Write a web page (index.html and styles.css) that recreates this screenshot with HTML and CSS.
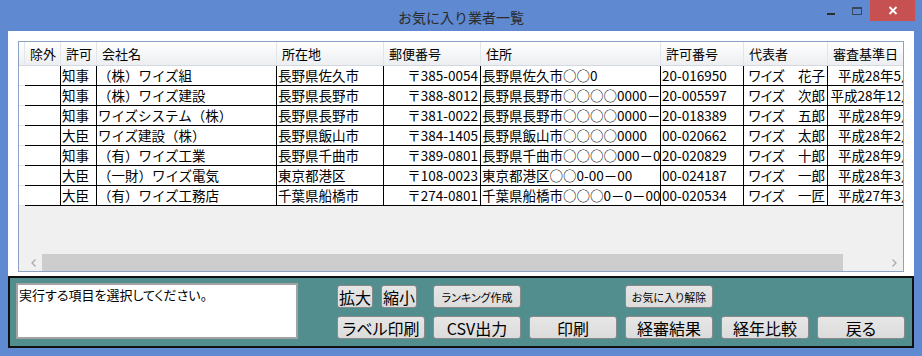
FILE: index.html
```html
<!DOCTYPE html>
<html lang="ja">
<head>
<meta charset="utf-8">
<title>お気に入り業者一覧</title>
<link rel="stylesheet" href="styles.css">
</head>
<body>
<div class="window">
  <div class="titlebar">
    <div class="tb-spacer"></div>
    <div class="title">お気に入り業者一覧</div>
    <div class="controls">
      <div class="ctl ctl-min"><span class="min-bar"></span></div>
      <div class="ctl ctl-max"><span class="max-box"></span></div>
      <div class="ctl ctl-close">
        <svg width="10" height="9" viewBox="0 0 10 9"><path d="M1.5 1 L8.5 8 M8.5 1 L1.5 8" stroke="#fff" stroke-width="1.8" fill="none"/></svg>
      </div>
    </div>
  </div>

  <div class="client">
    <div class="grid">
      <div class="grid-body">
        <div class="row head">
          <div class="hc rh"></div>
          <div class="hc">除外</div>
          <div class="hc">許可</div>
          <div class="hc">会社名</div>
          <div class="hc">所在地</div>
          <div class="hc">郵便番号</div>
          <div class="hc">住所</div>
          <div class="hc">許可番号</div>
          <div class="hc">代表者</div>
          <div class="hc">審査基準日</div>
        </div>
        <div class="row data">
          <div class="rh"></div><div class="c"></div><div class="c">知事</div><div class="c">（株）ワイズ組</div><div class="c">長野県佐久市</div><div class="c r">〒385-0054</div><div class="c">長野県佐久市○○0</div><div class="c">20-016950</div><div class="c r p">ワイズ　花子</div><div class="c r">平成28年5月10日</div>
        </div>
        <div class="row data">
          <div class="rh"></div><div class="c"></div><div class="c">知事</div><div class="c">（株）ワイズ建設</div><div class="c">長野県長野市</div><div class="c r">〒388-8012</div><div class="c">長野県長野市○○○○0000－</div><div class="c">20-005597</div><div class="c r p">ワイズ　次郎</div><div class="c r">平成28年12月10日</div>
        </div>
        <div class="row data">
          <div class="rh"></div><div class="c"></div><div class="c">知事</div><div class="c">ワイズシステム（株）</div><div class="c">長野県長野市</div><div class="c r">〒381-0022</div><div class="c">長野県長野市○○○○0000－</div><div class="c">20-018389</div><div class="c r p">ワイズ　五郎</div><div class="c r">平成28年9月10日</div>
        </div>
        <div class="row data">
          <div class="rh"></div><div class="c"></div><div class="c">大臣</div><div class="c">ワイズ建設（株）</div><div class="c">長野県飯山市</div><div class="c r">〒384-1405</div><div class="c">長野県飯山市○○○○0000</div><div class="c">00-020662</div><div class="c r p">ワイズ　太郎</div><div class="c r">平成28年2月10日</div>
        </div>
        <div class="row data">
          <div class="rh"></div><div class="c"></div><div class="c">知事</div><div class="c">（有）ワイズ工業</div><div class="c">長野県千曲市</div><div class="c r">〒389-0801</div><div class="c">長野県千曲市○○○○000－0</div><div class="c">20-020829</div><div class="c r p">ワイズ　十郎</div><div class="c r">平成28年9月10日</div>
        </div>
        <div class="row data">
          <div class="rh"></div><div class="c"></div><div class="c">大臣</div><div class="c">（一財）ワイズ電気</div><div class="c">東京都港区</div><div class="c r">〒108-0023</div><div class="c">東京都港区○○0-00－00</div><div class="c">00-024187</div><div class="c r p">ワイズ　一郎</div><div class="c r">平成28年3月10日</div>
        </div>
        <div class="row data">
          <div class="rh"></div><div class="c"></div><div class="c">大臣</div><div class="c">（有）ワイズ工務店</div><div class="c">千葉県船橋市</div><div class="c r">〒274-0801</div><div class="c">千葉県船橋市○○○0－0－00</div><div class="c">00-020534</div><div class="c r p">ワイズ　一匠</div><div class="c r">平成27年3月10日</div>
        </div>
        <div class="filler"></div>
        <div class="hscroll">
          <div class="arrow arrow-left"><svg width="5" height="8" viewBox="0 0 5 8"><path d="M4.5 0.5 L1 4 L4.5 7.5" stroke="#a8a8a8" stroke-width="1.2" fill="none"/></svg></div>
          <div class="track"><div class="thumb"></div></div>
          <div class="arrow arrow-right"><svg width="5" height="8" viewBox="0 0 5 8"><path d="M0.5 0.5 L4 4 L0.5 7.5" stroke="#a8a8a8" stroke-width="1.2" fill="none"/></svg></div>
        </div>
      </div>
    </div>

    <div class="panel">
      <div class="message">実行する項目を選択してください。</div>
      <div class="buttons">
        <div class="pair">
          <button class="btn btn-sq">拡大</button>
          <button class="btn btn-sq">縮小</button>
        </div>
        <button class="btn btn-small">ランキング作成</button>
        <div class="empty"></div>
        <button class="btn btn-small">お気に入り解除</button>
        <div class="empty"></div>
        <div class="empty"></div>
        <button class="btn">ラベル印刷</button>
        <button class="btn">CSV出力</button>
        <button class="btn">印刷</button>
        <button class="btn">経審結果</button>
        <button class="btn">経年比較</button>
        <button class="btn">戻る</button>
      </div>
    </div>
  </div>
</div>
</body>
</html>
```

FILE: styles.css
```css
* { box-sizing: border-box; }

html, body {
  margin: 0;
  padding: 0;
}

body {
  width: 922px;
  height: 356px;
  overflow: hidden;
  font-family: "Noto Sans CJK JP", "Noto Sans", sans-serif;
  color: #000;
  background: #5f89d1;
}

.window {
  width: 922px;
  height: 356px;
  background: #5f89d1;
  display: flex;
  flex-direction: column;
}

/* ---------- title bar ---------- */
.titlebar {
  height: 31px;
  display: grid;
  grid-template-columns: 1fr auto 1fr;
  align-items: start;
}

.title {
  font-size: 14px;
  line-height: 16px;
  margin-top: 9px;
  color: #2b2b2b;
}

.controls {
  justify-self: end;
  display: flex;
  padding-right: 7px;
}

.ctl {
  height: 21px;
  display: flex;
  align-items: flex-start;
  justify-content: center;
}

.ctl-min { width: 26px; padding-top: 13px; }
.min-bar {
  display: block;
  width: 8px;
  height: 2px;
  background: #2c2c2c;
}

.ctl-max { width: 26px; padding-top: 7px; }
.max-box {
  display: block;
  width: 10px;
  height: 8px;
  border: 1px solid #3a4660;
  border-top-width: 2px;
}

.ctl-close {
  width: 45px;
  background: #c75050;
  align-items: center;
}

/* ---------- client area ---------- */
.client {
  margin: 0 8px;
  height: 317px;
  background: #fff;
  display: flex;
  flex-direction: column;
}

.grid {
  margin: 10px 10px 4px;
  height: 231px;
  border: 1px solid #8ea3c4;
  background: #f0f0f0;
  overflow: hidden;
}

.grid-body {
  height: 100%;
  display: flex;
  flex-direction: column;
}

.row {
  display: grid;
  grid-template-columns: 6px 36px 36px 180px 107px 97px 180px 83px 84px 118px;
  width: 927px;
  flex: none;
}

.head {
  height: 24px;
}

.hc {
  background: linear-gradient(#ffffff, #f4f5f7 60%, #eceef1);
  border-right: 1px solid #e2e5ea;
  border-bottom: 1px solid #d4d9e0;
  font-size: 13px;
  line-height: 24px;
  padding-left: 5px;
  white-space: nowrap;
  overflow: hidden;
}

.head .rh { padding: 0; }

.data {
  height: 20px;
  background: #fff;
}

.data .rh {
  background: #fff;
  border-bottom: 1px solid #e4e4e4;
}

.c {
  border-right: 1px solid #000;
  border-bottom: 1px solid #000;
  font-size: 13.5px;
  line-height: 19px;
  padding-left: 1px;
  white-space: nowrap;
  overflow: hidden;
}

.c.p {
  font-feature-settings: "palt";
}

.c.r {
  text-align: right;
  padding-left: 0;
  padding-right: 2px;
}

.filler {
  flex: 1;
}

.hscroll {
  height: 17px;
  flex: none;
  display: flex;
  background: #f0f0f0;
}

.arrow {
  display: flex;
  align-items: center;
  justify-content: center;
}

.arrow-left { width: 23px; padding-left: 6px; }
.arrow-right { width: 17px; }

.track {
  flex: 1;
  display: flex;
}

.thumb {
  width: 801px;
  background: #cdcdcd;
}

/* ---------- bottom panel ---------- */
.panel {
  height: 72px;
  background: #528e8d;
  border: 2px solid #111;
  display: flex;
  align-items: flex-start;
  padding: 5px 0 0 6px;
}

.message {
  width: 282px;
  height: 56px;
  background: #fff;
  border: 2px solid #a3a3a3;
  font-size: 13px;
  line-height: 18px;
  padding: 1px 0 0 1px;
  font-feature-settings: "palt";
}

.buttons {
  margin-left: 39px;
  margin-top: 2px;
  display: grid;
  grid-template-columns: repeat(6, 88px);
  grid-auto-rows: 23px;
  column-gap: 8px;
  row-gap: 8px;
}

.pair {
  display: flex;
  gap: 8px;
}

.btn {
  font-family: "Noto Sans CJK JP", "Noto Sans", sans-serif;
  font-size: 16px;
  line-height: 20px;
  padding: 0;
  margin: 0;
  color: #000;
  background: linear-gradient(#e6e6e6, #dcdcdc);
  border: 1px solid #8a8a8a;
  border-radius: 3px;
  height: 23px;
  white-space: nowrap;
  font-feature-settings: "palt";
}

.btn-sq {
  width: 36px;
}

.btn-small {
  font-size: 11px;
}
```
